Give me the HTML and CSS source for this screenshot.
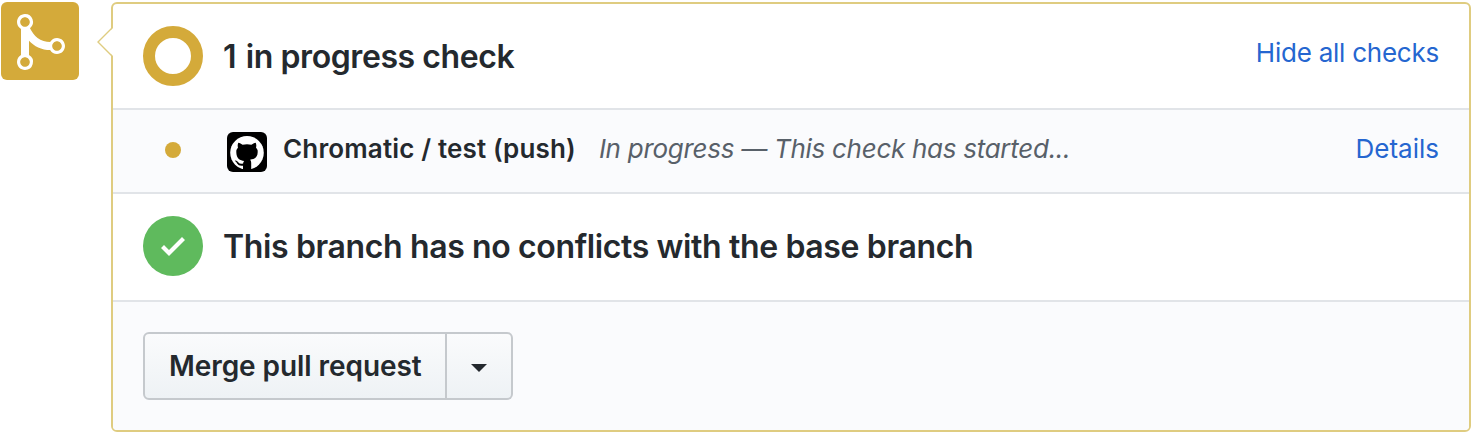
FILE: index.html
```html
<!DOCTYPE html>
<html lang="en">
<head>
<meta charset="utf-8">
<title>Merge status</title>
<link rel="stylesheet" href="styles.css">
</head>
<body>
<div class="merge">
  <div class="avatar">
    <svg width="48" height="64" viewBox="0 0 12 16" fill="#fff"><path fill-rule="evenodd" d="M10 7c-.73 0-1.38.41-1.73 1.02V8C7.22 7.98 6 7.64 5.14 6.98c-.75-.58-1.5-1.61-1.89-2.44A1.993 1.993 0 0 0 2 .99C.89.99 0 1.89 0 3a2 2 0 0 0 1 1.72v6.56c-.59.35-1 .99-1 1.72 0 1.11.89 2 2 2a1.993 1.993 0 0 0 1-3.72V7.67c.67.7 1.44 1.27 2.3 1.69.86.42 2.03.63 2.97.64v-.02c.36.61 1 1.02 1.73 1.02 1.11 0 2-.89 2-2 0-1.11-.89-2-2-2zm-6.8 6c0 .66-.55 1.2-1.2 1.2-.65 0-1.2-.55-1.2-1.2 0-.65.55-1.2 1.2-1.2.65 0 1.2.55 1.2 1.2zM2 4.2C1.34 4.2.8 3.65.8 3c0-.65.55-1.2 1.2-1.2.65 0 1.2.55 1.2 1.2 0 .65-.55 1.2-1.2 1.2zm8 6c-.66 0-1.2-.55-1.2-1.2 0-.65.55-1.2 1.2-1.2.65 0 1.2.55 1.2 1.2 0 .65-.55 1.2-1.2 1.2z"/></svg>
  </div>
  <div class="card">
    <svg class="caret" width="16" height="30" viewBox="0 0 16 30"><path d="M16 0v1L1 15l15 14v1z" fill="#fff"/><path d="M15 1L1 15l14 14" fill="none" stroke="#dfcc80" stroke-width="1.4"/></svg>
    <section class="row summary">
      <span class="ring"></span>
      <h3 class="title title-progress"><span class="count">1</span> in progress check</h3>
      <a class="link link-hide">Hide all checks</a>
    </section>
    <section class="row check">
      <span class="dot"></span>
      <span class="app"><svg width="34" height="34" viewBox="0 0 34 34"><circle cx="17" cy="16.8" r="16.8" fill="#fff"/><path d="M8.200 7q.5-.7 4.400 1.800q4.400-1 8.800 0q3.900-2.500 4.400-1.800q.9 2.200.2 4.600q1.800 2 1.700 4.500c0 5.700-3.600 7.100-7.600 7.600q1.100 1.100 1.100 3.100v7.200H13v-4.300q-4.500.6-5.900-2.300q-.8-1.500-1.800-2.100q-1.100-.9.300-.9q1.500.2 2.600 1.800q1.600 2.100 4.900 1.300q.2-1.600 1.100-2.500c-3.900-.5-7.900-1.900-7.900-8.900q-.1-2.500 1.700-4.500q-.7-2.400.2-4.600z" fill="#000"/></svg></span>
      <strong class="name">Chromatic / test (push)</strong>
      <em class="state">In progress — This check has started...</em>
      <a class="link link-details">Details</a>
    </section>
    <section class="row conflicts">
      <span class="success"><svg width="24" height="32" viewBox="0 0 12 16" fill="#fff"><path d="M12 5l-8 8-4-4 1.5-1.5L4 10l6.5-6.5z"/></svg></span>
      <h3 class="title title-branch">This branch has no conflicts with the base branch</h3>
    </section>
    <section class="row actions">
      <div class="group">
        <button class="btn btn-merge"><span class="label">Merge pull request</span></button>
        <button class="btn btn-menu" aria-label="Select merge method"><span class="arrow"></span></button>
      </div>
    </section>
  </div>
</div>
</body>
</html>
```

FILE: styles.css
```css
* { box-sizing: border-box; }
body {
  margin: 0;
  background: #fff;
  color: #24292e;
  font: 26px/40px Inter, "Liberation Sans", sans-serif;
  overflow: hidden;
}
.merge {
  display: flex;
  align-items: flex-start;
  gap: 32px;
  height: 434px;
  padding: 2px 2px 2px 1px;
}
.avatar {
  flex: none;
  width: 78px;
  height: 78px;
  padding: 8px 0 0 16px;
  border-radius: 6px;
  background: #d4aa3a;
}
.avatar svg { display: block; }
.card {
  position: relative;
  flex: 1;
  height: 430px;
  border: 2px solid #dfcc80;
  border-radius: 6px;
  background: #fff;
}
.caret { position: absolute; left: -16px; top: 23px; }
.row {
  display: flex;
  align-items: center;
  padding: 0 30px;
  border-bottom: 2px solid #e1e4e8;
  white-space: nowrap;
}
.summary { height: 106px; }
.check { height: 84px; padding-bottom: 2px; background: #fafbfd; }
.conflicts { height: 108px; padding-bottom: 2px; }
.actions { height: 128px; border-bottom: 0; border-radius: 0 0 4px 4px; background: #fafbfd; }
.ring {
  flex: none;
  width: 60px;
  height: 60px;
  margin-right: 20px;
  border: 12px solid #d4aa3a;
  border-radius: 50%;
}
.title { margin: 0; padding-top: 2px; font-size: 32px; font-weight: 600; }
.title-progress { letter-spacing: -0.42px; }
.count { margin-right: 2px; }
.title-branch { letter-spacing: -0.37px; }
.link { margin-left: auto; color: #2566d0; }
.link-hide { padding-bottom: 6px; letter-spacing: -0.24px; }
.link-details { padding-bottom: 2px; }
.dot {
  flex: none;
  width: 16px;
  height: 16px;
  margin: 0 46px 0 22px;
  border-radius: 50%;
  background: #d4aa3a;
}
.app {
  flex: none;
  width: 40px;
  height: 40px;
  margin: 4px 16px 0 0;
  padding: 4px 3px 0;
  border-radius: 6px;
  background: #000;
}
.app svg { display: block; }
.name { padding-bottom: 2px; font-weight: 600; letter-spacing: 0.15px; }
.state { margin-left: 23px; padding-bottom: 2px; color: #586069; letter-spacing: -0.28px; }
.success {
  display: flex;
  align-items: center;
  justify-content: center;
  width: 60px;
  height: 60px;
  margin-right: 20px;
  border-radius: 50%;
  background: #5fba5d;
}
.group { display: flex; }
.btn {
  display: flex;
  align-items: center;
  height: 68px;
  padding: 0;
  border: 2px solid #c5c9cd;
  background: linear-gradient(#fafbfc, #eef2f5);
  color: #24292e;
  font: 600 28px/40px Inter, "Liberation Sans", sans-serif;
  white-space: nowrap;
}
.btn-merge { width: 304px; padding-left: 24px; border-radius: 6px 0 0 6px; }
.btn-menu { width: 66px; padding: 3px 0 0 24px; border-left: 0; border-radius: 0 6px 6px 0; }
.arrow { border: 8px solid transparent; border-top-color: #24292e; border-bottom: 0; }
.label { letter-spacing: -0.07px; }
```
